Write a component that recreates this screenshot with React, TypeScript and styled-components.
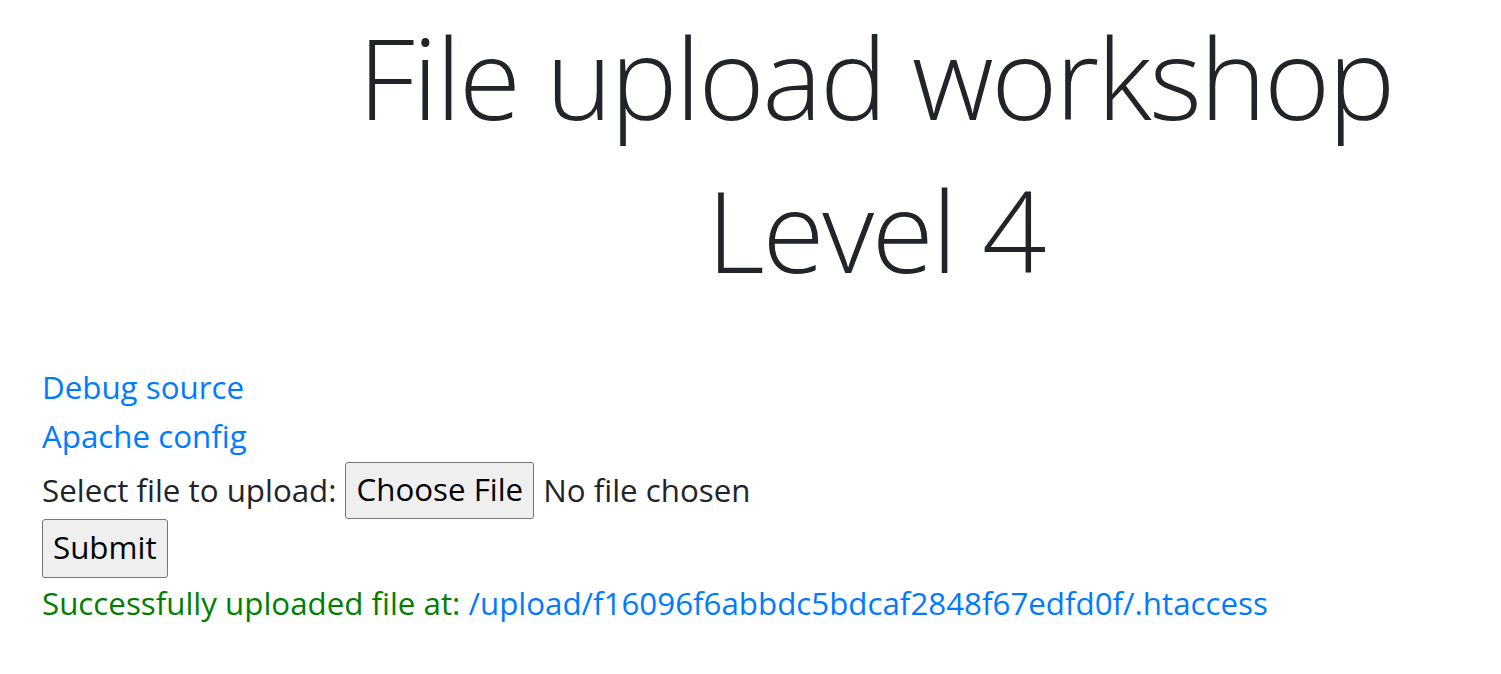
import React from "react";
import styled, { createGlobalStyle } from "styled-components";

const Global = createGlobalStyle`
  html, body { margin: 0; padding: 0; background: #fff; }
  body { font-family: "Open Sans", "Noto Sans", sans-serif; color: #212529; }
`;

const Page = styled.div`
  width: 1501px;
  min-height: 674px;
`;

const Heading = styled.h1`
  margin: 0;
  padding: 0 0 0 250px;
  text-align: center;
  font-family: "Open Sans", "Noto Sans", sans-serif;
  font-weight: 300;
  font-size: 113px;
  letter-spacing: -2.3px;
  line-height: 153px;
  color: #212529;
`;

const Body = styled.div`
  padding: 57px 0 0 42px;
  font-size: 31.3px;
  line-height: 49px;
`;

const LinkRow = styled.div`
  height: 49px;
`;

const Link = styled.a`
  color: #007bff;
  text-decoration: none;
`;

const FormRow = styled.div`
  display: flex;
  align-items: center;
  gap: 9px;
  height: 58px;
`;

const NativeButton = styled.button<{ $h: number }>`
  font-family: "Open Sans", "Noto Sans", sans-serif;
  font-size: 31.3px;
  color: #000;
  background: #efefef;
  border: 1px solid #767676;
  border-radius: 3px;
  padding: 0 10px;
  height: ${(p) => p.$h}px;
  line-height: 1;
`;

const Status = styled.div`
  color: #008000;
  line-height: 53px;
`;

export default function App() {
  return (
    <Page>
      <Global />
      <Heading>
        File upload workshop
        <br />
        Level 4
      </Heading>
      <Body>
        <LinkRow>
          <Link href="#">Debug source</Link>
        </LinkRow>
        <LinkRow>
          <Link href="#">Apache config</Link>
        </LinkRow>
        <FormRow>
          <span>Select file to upload:</span>
          <NativeButton $h={57}>Choose File</NativeButton>
          <span>No file chosen</span>
        </FormRow>
        <FormRow>
          <NativeButton $h={59}>Submit</NativeButton>
        </FormRow>
        <Status>
          Successfully uploaded file at:{" "}
          <Link href="#">/upload/f16096f6abbdc5bdcaf2848f67edfd0f/.htaccess</Link>
        </Status>
      </Body>
    </Page>
  );
}
